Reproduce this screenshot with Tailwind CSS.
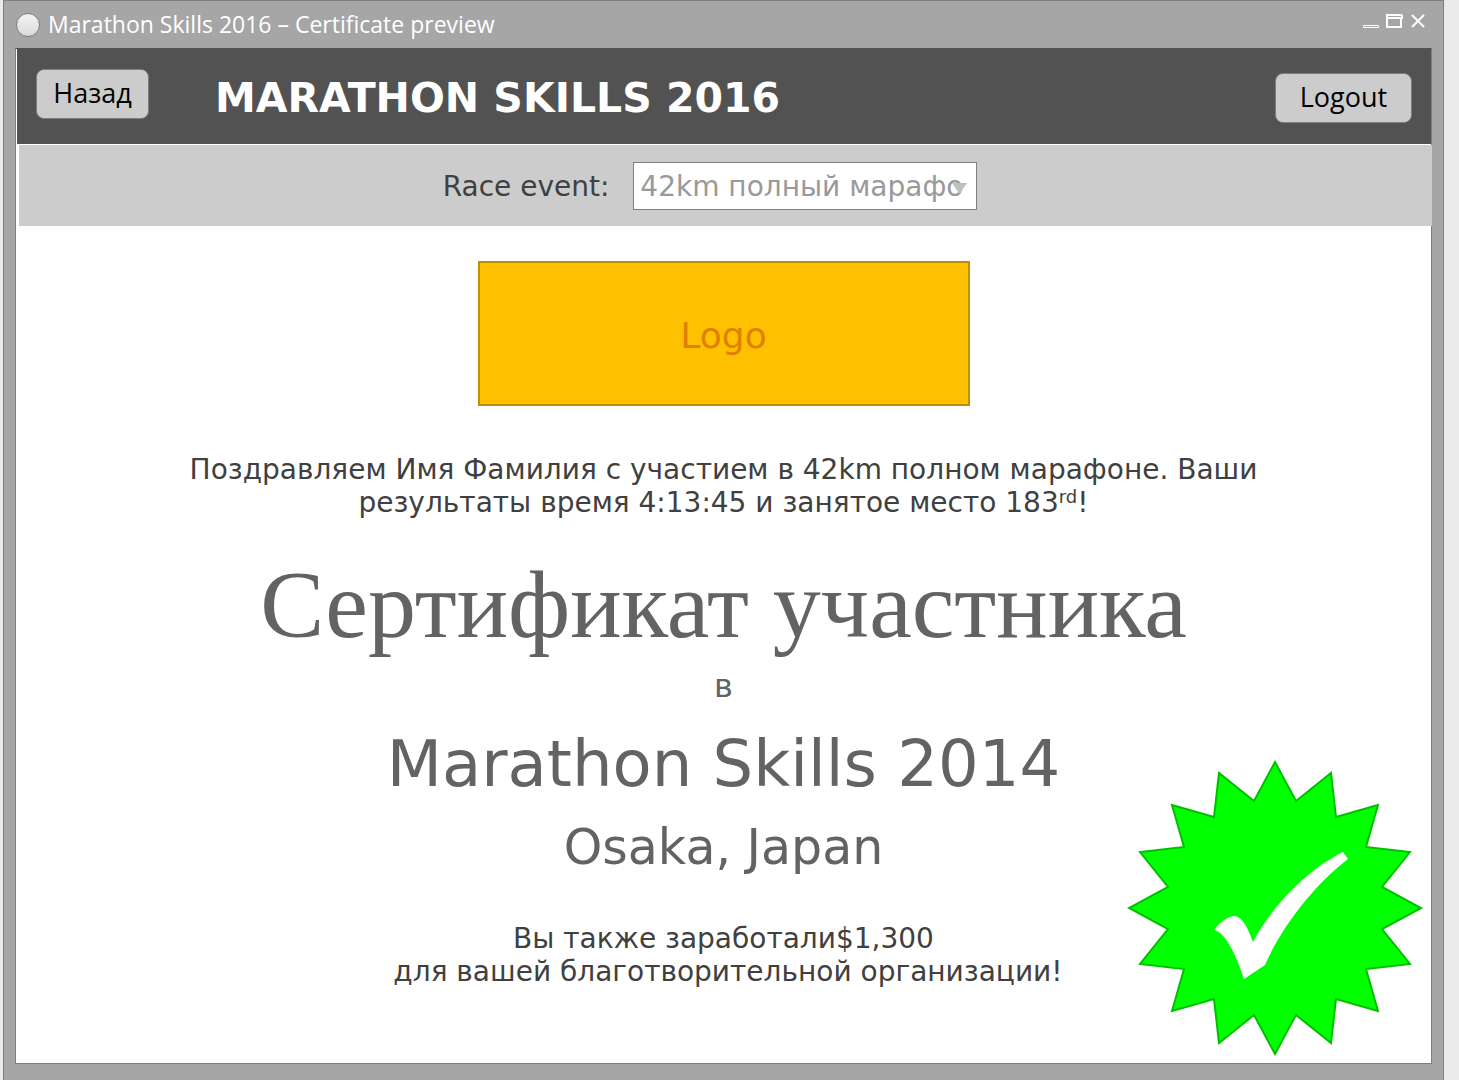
<!DOCTYPE html>
<html lang="ru">
<head>
<meta charset="utf-8">
<title>Marathon Skills 2016 – Certificate preview</title>
<script src="https://cdn.jsdelivr.net/npm/@tailwindcss/browser@4"></script>
</head>
<body class="min-h-screen bg-[#ebebeb] pl-[3px] pr-[15px] font-['DejaVu_Sans',Verdana,sans-serif] text-[#404040]">
<div class="flex min-h-screen flex-col border border-b-0 border-[#7f7f7f] bg-[#a6a6a6] px-[11px] pb-4">
  <div class="flex h-[47px] items-center pr-[6px] font-['Open_Sans','Segoe_UI',sans-serif]">
    <span class="mr-2 ml-px size-6 rounded-full border border-[#7f7f7f] bg-linear-to-b from-[#f4f4f4] to-[#dadada]"></span>
    <h1 class="grow pb-[2px] text-[23px] leading-[30px] text-white">Marathon Skills 2016 – Certificate preview</h1>
    <div class="flex items-center gap-[7px] self-start pt-3">
      <button type="button" aria-label="Minimize" class="h-4 w-4"><svg class="block" width="16" height="16" fill="none" stroke="#fff"><path d="M.5 12.500h15v2H.5z"/></svg></button>
      <button type="button" aria-label="Maximize" class="h-4 w-[17px]"><svg class="block" width="17" height="16"><path fill="#fff" fill-rule="evenodd" d="M0 1h16v1h1v4h-1v9H0zM2 3v1h13V3zM2 6v7h12V6z"/></svg></button>
      <button type="button" aria-label="Close" class="h-4 w-4"><svg class="block" width="16" height="16" fill="none" stroke="#fff" stroke-width="2"><path d="M2 2l12 12M14 2L2 14"/></svg></button>
    </div>
  </div>
  <main class="flex grow flex-col border border-[#7f7f7f] border-t-[#525252] bg-white">
    <header class="ml-px flex h-[95px] items-start bg-[#525252] pr-[19px] pl-[19px]">
      <button type="button" class="mt-5 h-[50px] w-[113px] rounded-lg border border-[#7f7f7f] bg-[#cccccc] pb-[2px] font-['Open_Sans','Segoe_UI',sans-serif] text-[27px] leading-8 text-black">Назад</button>
      <h2 class="ml-[66px] grow pt-[25px] text-[41px] leading-[48px] font-bold text-white">MARATHON SKILLS 2016</h2>
      <button type="button" class="mt-6 h-[50px] w-[137px] rounded-lg border border-[#7f7f7f] bg-[#cccccc] pb-[2px] font-['Open_Sans','Segoe_UI',sans-serif] text-[27px] leading-8 text-black">Logout</button>
    </header>
    <div class="mt-px -mr-px ml-[3px] flex h-[81px] items-center justify-center bg-[#cccccc] pr-[31px]">
      <label for="race" class="mr-6 pt-[2px] text-[28px] leading-8">Race event:</label>
      <div class="relative">
        <select id="race" class="block h-12 w-[344px] appearance-none border border-[#7f7f7f] bg-white pt-[3px] pl-[6px] text-[28px] leading-8 text-[#999999]"><option>42km полный марафо</option></select>
        <svg class="pointer-events-none absolute top-[21px] right-[10px]" width="15" height="11"><path fill="#bfbfbf" d="M0 0h15L7.500 11z"/></svg>
      </div>
    </div>
    <article class="relative flex grow flex-col items-center text-center">
      <div class="mt-[35px] flex h-[145px] w-[492px] items-center justify-center border-2 border-[#bf8f00] bg-[#ffc000] pt-1 text-[36px] leading-[44px] text-[#df8000]">Logo</div>
      <p class="mt-[47px] text-[28px] leading-[33px]">Поздравляем Имя Фамилия с участием в 42km полном марафоне. Ваши<br>результаты время 4:13:45 и занятое место 183<sup class="text-[18px]">rd</sup>!</p>
      <h3 class="mt-[31px] font-['Liberation_Serif','Times_New_Roman',serif] text-[96px] leading-[110px] text-[#636363]">Сертификат участника</h3>
      <p class="mt-[6px] text-[32px] leading-10 text-[#636363]">в</p>
      <p class="mt-[19px] text-[64px] leading-[78px] text-[#636363]">Marathon Skills 2014</p>
      <p class="mt-4 text-[49px] leading-[58px] text-[#636363]">Osaka, Japan</p>
      <p class="mt-[45px] text-[28px] leading-[33px]">Вы также заработали$1,300<br>&nbsp;для вашей благотворительной организации!</p>
      <svg class="absolute right-2 bottom-[7px]" width="296" height="296" viewBox="-148 -148 296 296">
        <path fill="#00ff00" stroke="#00c000" stroke-width="2" d="M146 0 107 21 135 56 91 61 103 103 61 91 56 135 21 107 0 146-21 107-56 135-61 91-103 103-91 61-135 56-107 21-146 0-107-21-135-56-91-61-103-103-61-91-56-135-21-107 0-146 21-107 56-135 61-91 103-103 91-61 135-56 107-21z"/>
        <path fill="#fff" d="M-61 22C-55 14-48 9-41 8C-33 8-27 20-22 34C-5 2 28-36 68-56L73-49C40-24 7 18-10 57L-31 71C-39 46-50 24-61 22z"/>
      </svg>
    </article>
  </main>
</div>
</body>
</html>
